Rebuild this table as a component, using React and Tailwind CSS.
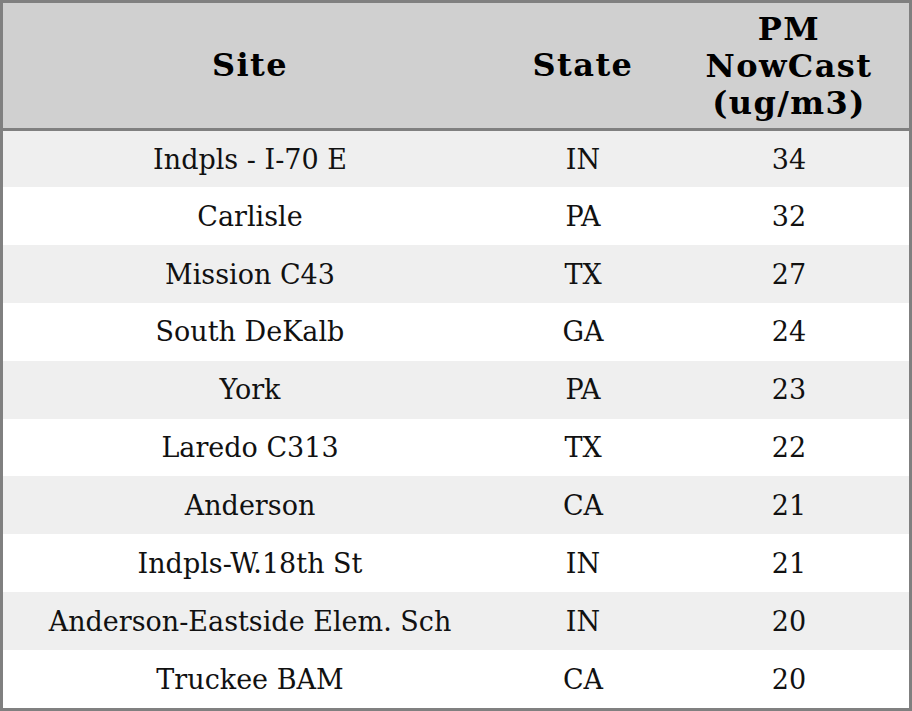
export default function App() {
  const rows = [
    ["Indpls - I-70 E", "IN", "34"],
    ["Carlisle", "PA", "32"],
    ["Mission C43", "TX", "27"],
    ["South DeKalb", "GA", "24"],
    ["York", "PA", "23"],
    ["Laredo C313", "TX", "22"],
    ["Anderson", "CA", "21"],
    ["Indpls-W.18th St", "IN", "21"],
    ["Anderson-Eastside Elem. Sch", "IN", "20"],
    ["Truckee BAM", "CA", "20"],
  ];
  return (
    <div className="w-[912px] h-[711px] border-[3px] border-[#808080] bg-white text-black font-['DejaVu_Serif',serif]">
      <div className="grid grid-cols-[494px_172px_240px] h-[125px] bg-[#d0d0d0] border-b-[3px] border-[#808080] box-content font-bold text-[32px] leading-[37px] tracking-[1.4px]">
        <div className="flex items-center justify-center text-center">Site</div>
        <div className="flex items-center justify-center text-center">State</div>
        <div className="flex items-center justify-center text-center pt-[2px]">PM<br />NowCast<br />(ug/m3)</div>
      </div>
      {rows.map((r, i) => (
        <div
          key={i}
          className={
            "grid grid-cols-[494px_172px_240px] text-[27px] text-[#111] " +
            (i === 0 ? "h-[56px] " : "h-[57.89px] ") +
            (i % 2 === 0 ? "bg-[#efefef]" : "bg-white")
          }
        >
          <div className="flex items-center justify-center pt-[2px]">{r[0]}</div>
          <div className="flex items-center justify-center pt-[2px]">{r[1]}</div>
          <div className="flex items-center justify-center pt-[2px]">{r[2]}</div>
        </div>
      ))}
    </div>
  );
}
